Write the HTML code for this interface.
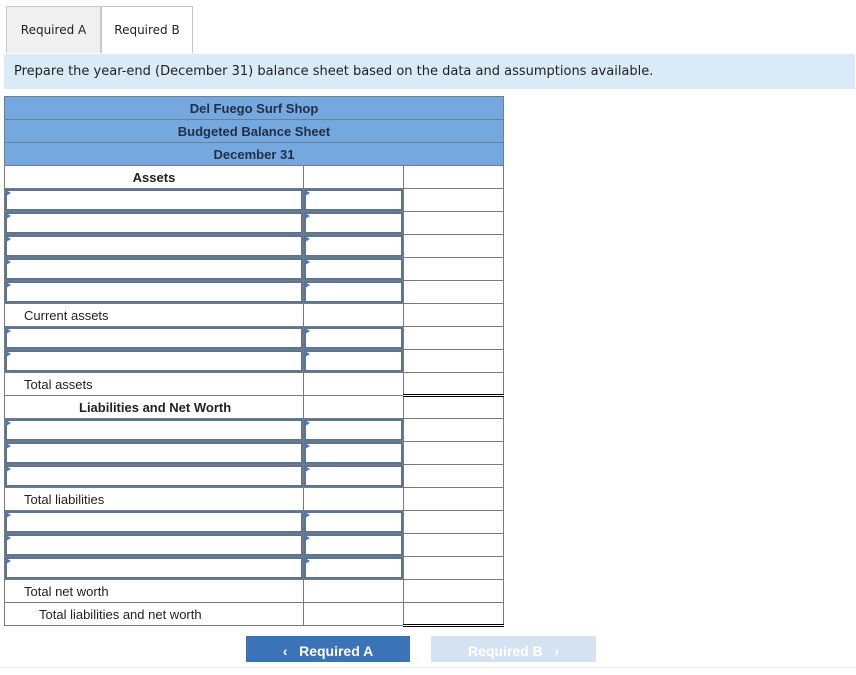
<!DOCTYPE html><html><head><style>
body{margin:0;width:856px;height:675px;background:#fff;font-family:"Liberation Sans",Arial,sans-serif;position:relative;overflow:hidden}
.tab{position:absolute;top:6px;height:47px;box-sizing:border-box;border:1px solid #c8c8c8;border-bottom:none;font-family:"DejaVu Sans",sans-serif;font-size:12px;line-height:47px;text-align:center;color:#222}
.inst{position:absolute;left:4px;top:54px;width:851px;height:35px;background:#dbeaf7;font-family:"DejaVu Sans",sans-serif;font-size:13px;line-height:36px;padding-left:10px;box-sizing:border-box;color:#222}
table{position:absolute;left:4px;top:96px;border-collapse:collapse;font-size:13px;color:#222}
td{height:23px;border:1px solid #7a7a7a;padding:0;box-sizing:border-box;position:relative}
td.h{background:#76a8e0;text-align:center;border-color:#6a7f9a;font-weight:bold;color:#1f2f45}
.c1{width:299px}.c2{width:100px}.c3{width:100px}
.in{position:absolute;left:0;top:0;right:0;bottom:0;border:2px solid #5b7597}
.in:before{content:"";position:absolute;left:-1px;top:-1px;border-left:5px solid #4f79b0;border-top:3px solid transparent;border-bottom:3px solid transparent}
.ta{border-top:1px solid #000 !important;border-bottom:3px double #000 !important}
.btn{position:absolute;top:636px;height:26px;font-size:14px;font-weight:bold;color:#fff;line-height:31px;text-align:center}
</style></head><body>
<div style="position:absolute;left:0;top:667px;width:856px;border-top:1px solid #eee"></div>
<div class="tab" style="left:6px;width:95px;background:#f0f0f0">Required A</div>
<div class="tab" style="left:101px;width:92px;background:#fff">Required B</div>
<div class="inst">Prepare the year-end (December 31) balance sheet based on the data and assumptions available.</div>
<table>
<tr><td class="h" colspan="3">Del Fuego Surf Shop</td></tr>
<tr><td class="h" colspan="3">Budgeted Balance Sheet</td></tr>
<tr><td class="h" colspan="3">December 31</td></tr>
<tr><td class="c1" style="text-align:center;font-weight:bold">Assets</td><td class="c2"></td><td class="c3"></td></tr>
<tr><td class="c1"><div class="in"></div></td><td><div class="in"></div></td><td></td></tr>
<tr><td><div class="in"></div></td><td><div class="in"></div></td><td></td></tr>
<tr><td><div class="in"></div></td><td><div class="in"></div></td><td></td></tr>
<tr><td><div class="in"></div></td><td><div class="in"></div></td><td></td></tr>
<tr><td><div class="in"></div></td><td><div class="in"></div></td><td></td></tr>
<tr><td style="padding-left:19px">Current assets</td><td></td><td></td></tr>
<tr><td><div class="in"></div></td><td><div class="in"></div></td><td></td></tr>
<tr><td><div class="in"></div></td><td><div class="in"></div></td><td></td></tr>
<tr><td style="padding-left:19px">Total assets</td><td></td><td class="ta"></td></tr>
<tr><td style="padding-left:74px;font-weight:bold">Liabilities and Net Worth</td><td></td><td></td></tr>
<tr><td><div class="in"></div></td><td><div class="in"></div></td><td></td></tr>
<tr><td><div class="in"></div></td><td><div class="in"></div></td><td></td></tr>
<tr><td><div class="in"></div></td><td><div class="in"></div></td><td></td></tr>
<tr><td style="padding-left:19px">Total liabilities</td><td></td><td></td></tr>
<tr><td><div class="in"></div></td><td><div class="in"></div></td><td></td></tr>
<tr><td><div class="in"></div></td><td><div class="in"></div></td><td></td></tr>
<tr><td><div class="in"></div></td><td><div class="in"></div></td><td></td></tr>
<tr><td style="padding-left:19px">Total net worth</td><td></td><td></td></tr>
<tr><td style="padding-left:34px">Total liabilities and net worth</td><td></td><td class="ta"></td></tr>
</table>
<div class="btn" style="left:246px;width:164px;background:#3a73b8">&lsaquo;&nbsp;&nbsp;&nbsp;Required A</div>
<div class="btn" style="left:431px;width:165px;background:#d5e2f1">Required B&nbsp;&nbsp;&nbsp;&rsaquo;</div>
</body></html>
